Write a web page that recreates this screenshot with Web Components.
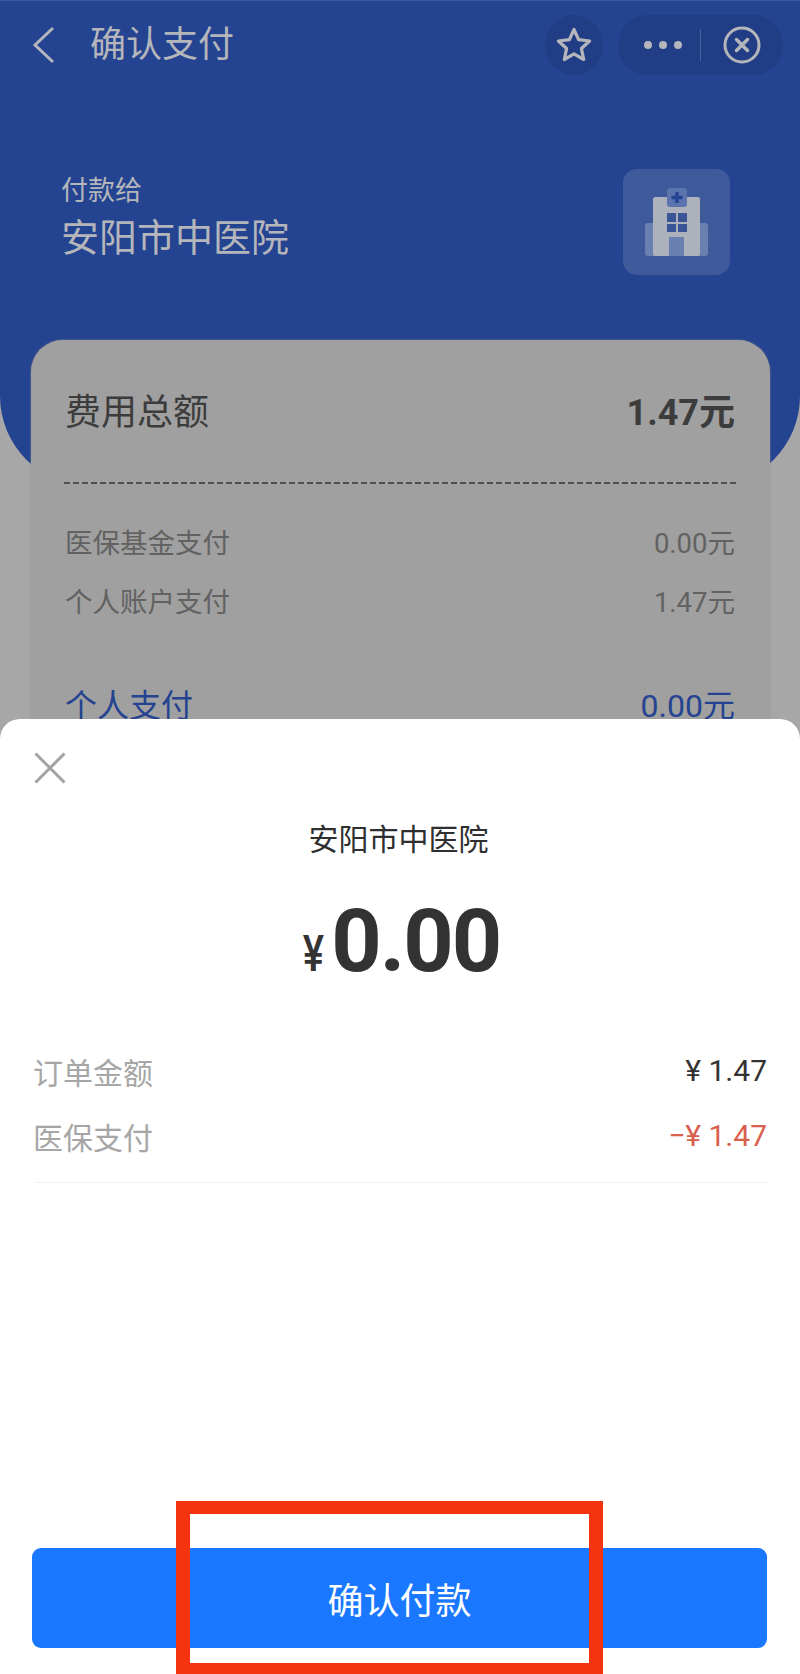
<!DOCTYPE html>
<html lang="zh">
<head>
<meta charset="utf-8">
<title>确认支付</title>
<style>
  html, body { margin: 0; padding: 0; }
  body { font-family: Roboto, "Noto Sans CJK SC", sans-serif; background: #a7a7a7; }
</style>
</head>
<body>
<pay-page>
  <pay-header title="确认支付" label="付款给" name="安阳市中医院"></pay-header>
  <pay-card>
    <fee-row kind="total" label="费用总额" value="1.47元"></fee-row>
    <fee-row kind="sub" label="医保基金支付" value="0.00元"></fee-row>
    <fee-row kind="sub" label="个人账户支付" value="1.47元"></fee-row>
    <fee-row kind="own" label="个人支付" value="0.00元"></fee-row>
  </pay-card>
  <pay-sheet slot="sheet" name="安阳市中医院" amount="0.00">
    <sheet-row label="订单金额" value="¥ 1.47"></sheet-row>
    <sheet-row label="医保支付" value="−¥ 1.47" minus></sheet-row>
  </pay-sheet>
</pay-page>

<script>
class PayPage extends HTMLElement {
  constructor() {
    super();
    this.attachShadow({ mode: "open" });
    this.shadowRoot.innerHTML = `
      <style>
        :host { display: block; position: relative; width: 800px; height: 1674px; overflow: hidden; background: #a7a7a7; }
      </style>
      <slot></slot>
      <slot name="sheet"></slot>
    `;
  }
}

class PayHeader extends HTMLElement {
  constructor() {
    super();
    this.attachShadow({ mode: "open" });
    this.shadowRoot.innerHTML = `
      <style>
        :host { display: block; height: 486px; box-sizing: border-box; padding-top: 14px; border-top: 1px solid #3a5aa5; background: #244390; border-radius: 0 0 90px 90px; color: #b4b6bb; }
        .nav { display: flex; align-items: center; height: 60px; padding: 0 17px 0 31px; }
        .back { width: 24px; height: 38px; flex: none; }
        h1 { margin: 0 0 0 35px; font-size: 36px; font-weight: 400; line-height: 60px; flex: 1; }
        .star { width: 58px; height: 60px; border-radius: 50%; background: #213d85; display: flex; align-items: center; justify-content: center; margin-right: 15px; }
        .capsule { width: 165px; height: 60px; border-radius: 30px; background: #213d85; display: flex; align-items: center; }
        .dots { width: 64px; display: flex; justify-content: flex-end; gap: 7px; }
        .dots i { width: 8px; height: 8px; border-radius: 50%; background: #b4b6bb; }
        .sep { width: 1px; height: 32px; margin-left: 18px; background: #46609e; }
        .close { margin-left: 22px; width: 38px; height: 38px; }
        .payee { display: flex; justify-content: space-between; padding: 98px 70px 0 61px; }
        .label { font-size: 27px; line-height: 36px; }
        .name { font-size: 38px; line-height: 46px; margin-top: 6px; }
        .tile { width: 107px; height: 106px; border-radius: 14px; background: #3e5a9b; margin-top: -4px; }
        svg { display: block; }
      </style>
      <div class="nav">
        <svg class="back" viewBox="0 0 24 38"><path d="M22 2 4 19l18 17" fill="none" stroke="#b4b6bb" stroke-width="3"/></svg>
        <h1></h1>
        <div class="star">
          <svg width="36" height="36" viewBox="0 0 36 36"><path d="M18 2.500l4.600 10.200 11 1.300-8.200 7.500 2.300 11L18 26.900 8.300 32.500l2.300-11L2.400 14l11-1.300z" fill="none" stroke="#b4b6bb" stroke-width="3.200" stroke-linejoin="round"/></svg>
        </div>
        <div class="capsule">
          <div class="dots"><i></i><i></i><i></i></div>
          <div class="sep"></div>
          <svg class="close" viewBox="0 0 38 38"><circle cx="19" cy="19" r="17" fill="none" stroke="#b4b6bb" stroke-width="3"/><path d="M13.500 13.500l11 11m0-11l-11 11" stroke="#b4b6bb" stroke-width="3.500" stroke-linecap="round"/></svg>
        </div>
      </div>
      <div class="payee">
        <div>
          <div class="label"></div>
          <div class="name"></div>
        </div>
        <div class="tile">
          <svg width="107" height="106" viewBox="0 0 107 106">
            <rect x="22" y="54" width="63" height="33" rx="3" fill="#6a80b0"/>
            <rect x="30" y="28" width="47" height="59" rx="2" fill="#adb1bb"/>
            <rect x="44" y="19" width="20" height="19" rx="3" fill="#5c74ad"/>
            <path d="M54 23v11m-5.500-5.500h11" stroke="#244390" stroke-width="3.500"/>
            <path d="M44 44h9v9h-9zM55 44h9v9h-9zM44 55h9v8h-9zM55 55h9v8h-9z" fill="#3a5596"/>
            <rect x="46" y="68" width="15" height="19" fill="#6a80b0"/>
          </svg>
        </div>
      </div>
    `;
    this.shadowRoot.querySelector("h1").textContent = this.getAttribute("title");
    this.shadowRoot.querySelector(".label").textContent = this.getAttribute("label");
    this.shadowRoot.querySelector(".name").textContent = this.getAttribute("name");
  }
}

class PayCard extends HTMLElement {
  constructor() {
    super();
    this.attachShadow({ mode: "open" });
    this.shadowRoot.innerHTML = `
      <style>
        :host { display: block; box-sizing: border-box; width: 739px; height: 420px; margin: -146px 0 0 31px; padding: 44px 35px 0 34px; background: #a0a0a0; border-radius: 32px; box-shadow: 0 0 2px #8c8c8c; }
      </style>
      <slot></slot>
    `;
  }
}

class FeeRow extends HTMLElement {
  constructor() {
    super();
    this.attachShadow({ mode: "open" });
    this.shadowRoot.innerHTML = `
      <style>
        :host { display: flex; justify-content: space-between; align-items: center; }
        :host([kind="total"]) { font-size: 36px; color: #3c3c3c; height: 50px; padding: 0 1px 50px; margin: 0 -1px 27px; background: repeating-linear-gradient(90deg, #4f4f4f 0 6px, transparent 6px 9px) left bottom / 100% 2px no-repeat; }
        :host([kind="total"]) .v { font-weight: 700; }
        :host([kind="sub"]) { font-size: 27.500px; color: #626262; height: 59px; }
        :host([kind="own"]) { font-size: 32px; color: #244390; height: 50px; margin-top: 49px; }
      </style>
      <span class="l"></span><span class="v"></span>
    `;
    this.shadowRoot.querySelector(".l").textContent = this.getAttribute("label");
    this.shadowRoot.querySelector(".v").textContent = this.getAttribute("value");
  }
}

class PaySheet extends HTMLElement {
  constructor() {
    super();
    this.attachShadow({ mode: "open" });
    this.shadowRoot.innerHTML = `
      <style>
        :host { display: flex; flex-direction: column; position: absolute; left: 0; right: 0; top: 719px; bottom: 0; box-sizing: border-box; padding: 33px 32px 26px; background: #fff; border-radius: 20px 20px 0 0; color: #333; }
        .x { display: block; width: 32px; height: 32px; margin-left: 2px; }
        .name { margin-top: 34px; padding-right: 3px; text-align: center; font-size: 30px; line-height: 44px; color: #2f2f2f; }
        .amount { display: flex; justify-content: center; align-items: baseline; margin-top: 19px; height: 120px; line-height: 120px; font-weight: 700; }
        .cur { display: inline-block; font-size: 50px; margin-right: 5px; font-weight: 500; transform: scaleX(.8); }
        .num { font-size: 88px; letter-spacing: -2px; }
        .rows { margin: 37px 0 0 3px; padding: 0 1px 14px 0; border-bottom: 1px solid #f2f2f2; }
        button { display: block; margin-top: auto; width: 735px; height: 100px; border: 0; border-radius: 9px; background: #1a77ff; color: #fff; font: inherit; font-size: 36px; }
        .mark { position: absolute; left: 176px; top: 782px; width: 399px; height: 149px; border: solid #f5330f; border-width: 13px 14px; }
      </style>
      <svg class="x" viewBox="0 0 32 32"><path d="M1.500 1.500l29 29m0-29l-29 29" fill="none" stroke="#a3a3a3" stroke-width="3"/></svg>
      <div class="name"></div>
      <div class="amount"><span class="cur">¥</span><span class="num"></span></div>
      <div class="rows"><slot></slot></div>
      <button>确认付款</button>
      <div class="mark"></div>
    `;
    this.shadowRoot.querySelector(".name").textContent = this.getAttribute("name");
    this.shadowRoot.querySelector(".num").textContent = this.getAttribute("amount");
  }
}

class SheetRow extends HTMLElement {
  constructor() {
    super();
    this.attachShadow({ mode: "open" });
    this.shadowRoot.innerHTML = `
      <style>
        :host { display: flex; justify-content: space-between; align-items: center; height: 65px; font-size: 30px; }
        .l { color: #a6a6a6; margin-left: -2px; }
        .v { color: #333; }
        :host([minus]) .v { color: #d8604c; }
      </style>
      <span class="l"></span><span class="v"></span>
    `;
    this.shadowRoot.querySelector(".l").textContent = this.getAttribute("label");
    this.shadowRoot.querySelector(".v").textContent = this.getAttribute("value");
  }
}

customElements.define("pay-page", PayPage);
customElements.define("pay-header", PayHeader);
customElements.define("pay-card", PayCard);
customElements.define("fee-row", FeeRow);
customElements.define("pay-sheet", PaySheet);
customElements.define("sheet-row", SheetRow);
</script>
</body>
</html>
